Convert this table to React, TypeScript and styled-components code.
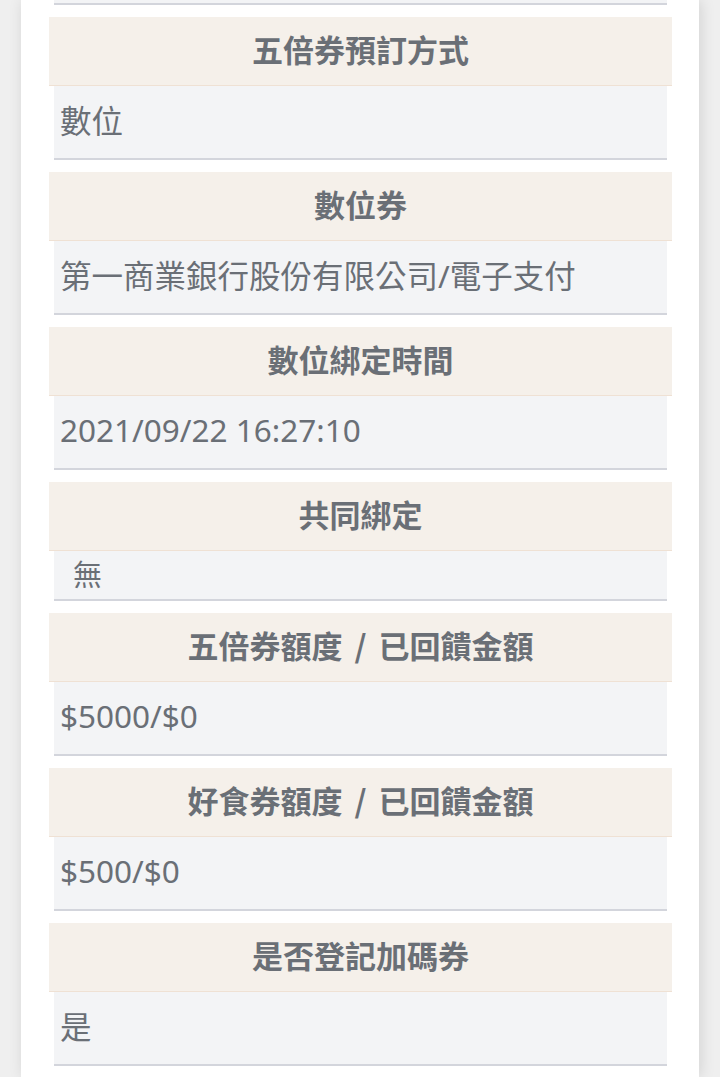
import React from "react";
import styled, { createGlobalStyle } from "styled-components";

const Global = createGlobalStyle`
  html, body { margin: 0; padding: 0; background: #efefef; }
  body { font-family: "Noto Sans", "Noto Sans CJK TC", sans-serif; }
`;

const Page = styled.div`
  height: 1077px;
  overflow: hidden;
  padding: 0 21px;
  box-sizing: border-box;
`;

const Card = styled.div`
  background: #ffffff;
  height: 100%;
  box-shadow: 2px 0 14px rgba(0, 0, 0, 0.12);
  padding: 0 27px 0 28px;
  overflow: hidden;
`;

const List = styled.div`
  display: flex;
  flex-direction: column;
  gap: 12px;
  margin-top: -69px;
`;

const Section = styled.section`
  display: flex;
  flex-direction: column;
`;

const Header = styled.div`
  height: 62px;
  padding-bottom: 6px;
  background: #f5f0ea;
  border-bottom: 1px solid #efe1d4;
  display: flex;
  align-items: center;
  justify-content: center;
  font-family: "Noto Sans CJK TC", "Liberation Sans", sans-serif;
  font-weight: 700;
  font-size: 31px;
  color: #6a6f76;
  white-space: pre;
`;

const Sep = styled.span`
  padding: 0 5px;
`;

const Value = styled.div<{ $short?: boolean }>`
  margin: 0 5px;
  height: ${(p) => (p.$short ? 44 : 66)}px;
  padding-bottom: ${(p) => (p.$short ? 4 : 6)}px;
  padding-left: ${(p) => (p.$short ? 19 : 6)}px;
  background: #f3f4f6;
  border-bottom: 2px solid #d3d5dc;
  display: flex;
  align-items: center;
  font-size: ${(p) => (p.$short ? 29 : 31.5)}px;
  color: #6a6f76;
  font-family: "Noto Sans", "Noto Sans CJK TC", sans-serif;
`;

const rows: { title: string; value: string; short?: boolean }[] = [
  { title: "五倍券預訂方式", value: "數位" },
  { title: "數位券", value: "第一商業銀行股份有限公司/電子支付" },
  { title: "數位綁定時間", value: "2021/09/22 16:27:10" },
  { title: "共同綁定", value: "無", short: true },
  { title: "五倍券額度 / 已回饋金額", value: "$5000/$0" },
  { title: "好食券額度 / 已回饋金額", value: "$500/$0" },
  { title: "是否登記加碼券", value: "是" },
];

function renderTitle(t: string) {
  const parts = t.split(" / ");
  if (parts.length === 1) return t;
  return (
    <>
      {parts[0]}
      <Sep> / </Sep>
      {parts[1]}
    </>
  );
}

export default function App() {
  return (
    <>
      <Global />
      <Page>
        <Card>
          <List>
            <Section>
              <Value />
            </Section>
            {rows.map((r) => (
              <Section key={r.title}>
                <Header>{renderTitle(r.title)}</Header>
                <Value $short={r.short}>{r.value}</Value>
              </Section>
            ))}
          </List>
        </Card>
      </Page>
    </>
  );
}
